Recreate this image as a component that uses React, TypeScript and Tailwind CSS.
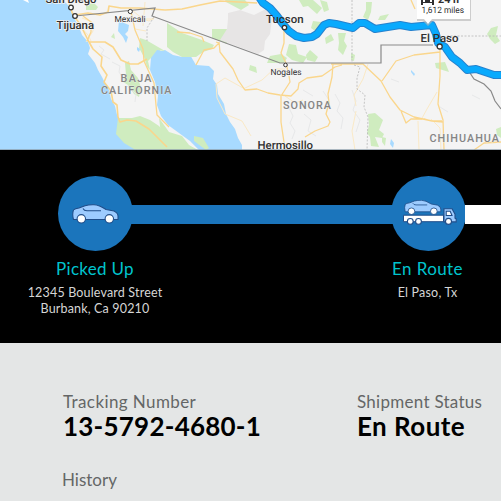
import type { ReactNode } from "react";

const ROUTE = "M259-3 263 3 270 8 277 16 283 24 289 31 296 36 304 38 312 37 317 34 324 25 329 23 336 24 353 28 359 23 365 23 375 29 400 25 411 27 432 25 436 34 438 43 445 47 452 57 460 63 467 70 476 69 494 75H508";

const MapView = () => (
  <svg viewBox="0 0 501 150" className="block h-[150px] w-full shrink-0 bg-[#f4f4f4]" fontFamily="Roboto, sans-serif">
    {/* Pacific and gulf */}
    <path fill="#a8daff" d="M0 0H63L69 6 73 16 79 27 82 35 88 42 90 48 88 54 95 63 98 70 102 77 105 83 109 90 111 99 115 106 117 115 119 118 124 130 139 141 153 150H0Z" />
    <path fill="#a8daff" d="M155 47 161 51 165 50 173 55 182 57 189 53 193 60 196 65 209 66 214 71 213 79 217 85 218 94 224 104 226 114 230 122 235 129 238 138 242 145 242 150H199L190 141 179 133 168 125 161 116 157 105 158 96 155 82 150 70 151 57Z" />
    <path fill="#fff" d="M23 0h5l1 3-2-1Z" />
    {/* Parks */}
    <g fill="#cfecbf">
      <path d="M118 118h14l8-2 10 4 9 6 8 9 3 25h-17l-14-8-15-9-8-9Z" />
      <path d="M140 38l6 2 19 11-8-1-6 8-3 3 2 9-3-3-3-10-5-9Z" />
      <path d="M167 23l15 10 20 7 12 5-2 4-9 3-7 5-14 0-9-5-6-5Z" />
      <path d="M212 29h15v15l-15-6ZM86 4l8-1 4 4-2 3H86ZM225 0h20l4 5-8 5-15-8ZM159 118l10 14 13 4 7 9 9 5h-35ZM194 136l9 2 6 10-3 2-12-9Z" />
      <path d="M125 63l4-2 2 9 7 8 3 10-2 9-5-3-6-9-5-3 3-7ZM111 37l3-4 1 6Z" />
      <path d="M299 0h14l9 8-5 6-9-8-5 1ZM313 21l8 1 3 7-6 4-7-5ZM325 38l6-4 3 6-8 4ZM289 44l7 1 2 9 9 3-4 6-11-3-6-5ZM270 56l11-2 6 4-3 5h-17ZM306 55l4-5 8 7-3 5-8-2ZM250 65l6 2 1 6-8-3ZM320 0l7 2 2 8-5 2Z" />
      <path d="M338 33l8 0-2 8 3 5-4 9-5-5 1-7ZM366 2l6 0-1 10-3 8-5-3 3-7ZM380 16l9-2-4 6h-7ZM351 53l4 2-1 6-3-1ZM491 28l7-2-2 9 4 6-5 3-5-5-3-5ZM435 63l10-1 4 10-13-4ZM368 114l7-1 8 7-4 10 5 4-2 4-7-1 4 10-8-1-1-9-3-4 2-8ZM382 137l4 1-1 8-3-4ZM496 129l5-2v11l-4-3Z" />
    </g>
    <path fill="#e7e5e5" d="M228 13l12-3 14 5 12-6 6 10-2 15-5 7-1 9-6 4-38-14 7-11 1-10Z" />
    <path fill="#a8daff" d="M119 20l5 3 5 2-1 6-3 3 3 3-2 6-3-6-5-6ZM137 47l3 2-1 3-2-2ZM411 70l4 4-1 2-3-4ZM391 139l3 4-1 5-3-4Z" />
    {/* Terrain */}
    <path fill="none" stroke="#e7e8e9" d="M99 46l5 4-3 4 9 5M112 62l8 4-1 6 5 8M127 86l9 8-1 8M289 108l4 8-3 7 5 8-3 8M304 114l7 6-3 11 8 5M335 94l5 9-3 8 6 7-2 11M352 90l4 11-3 9 7 10-4 12M391 79l8 3M440 107l8 5M472 95l8 4M303 90l10 6M323 91l6 9" />
    {/* Minor roads */}
    <path fill="none" stroke="#fae9c6" d="M82 18l10 4 1 9-7 11M78 24l10 11 3 6M133 11l10 8 6 2 6-4M145 2l-2 24M134 19h20M135 29l11 2M216 84l9-6 18 10M216 84l1 14 8 16 17 7 9 15M243 89l19-9 12-11 11 0M285 96l10 7 8-3M368 64l-5 15-9 16 2 11M437 92l-10 17-6 11M418 121l1 29M431 119l9 9 1 22M356 111l-4 20 3 19" />
    {/* Highways */}
    <g fill="none" stroke="#fad68c" strokeWidth="1.3" strokeLinejoin="round">
      <path d="M68 0l5 15 7 9 9 18 16 0 8 5 8 13 9 4 8 0 9-5M89 42l4 7 9 8-1 9 6 9-3 7 7 9 2 11 4 3 1 12 2 5 7-2 9 1 13 8 18 18M165 10l17-1 18-4 20-4 37 2M75 15l13-2 12 2 8-3 1-6 12 2 19 0 25 2" strokeWidth="1.6" />
      <path d="M83 16l8 6 0 10-4 9M131 12l4 18 8 19 1 12 10 22 2 22 1 10 12 12M177 32l13 1 12 4 2 5M216 42l3 1-5 5-10 2-8 15M219 42l1 10 13 17 5 11 7 10 12-1 11 4 12 2 11 1 7-7 1-6 8-5 15-2 13-9 7-2M284 28l0 15-3 10 5 10 3 13 1 6-9 14 0 26 4 27M333 64l-1 13-4 17 1 9-3 11 4 8-2 4-13 5-10 6M331 64h32l18 17 9 16 10 13 14 7 18 4 10 0M382 81l14-20 18-6 26-3M440 46l0 30-2 28 5 16 1 30M401 111l5 12 5-4h14l7 2 11 1M411 0l4 9M474 150l10-7 17-1" />
    </g>
    {/* Borders */}
    <g fill="none" stroke="#898989" strokeWidth="1.2">
      <path d="M75 16l80-8-3 8 128 47h101V45h52" />
      <path strokeDasharray="2 1.5" strokeWidth=".8" stroke="#b8b8b8" d="M352 0v63M447 36h54M154 17l-7 11 0 13M354 65l6 2-3 11 0 11 8 6-1 12 4 10-1 33" />
      <path d="M470 73l4 6 10 5 7 7 4 10 6 8" />
    </g>
    {/* Route */}
    <g fill="none" strokeLinejoin="round">
      <path d={ROUTE} stroke="#2682ce" strokeWidth="8" />
      <path d={ROUTE} stroke="#09aafd" strokeWidth="6" />
    </g>
    <g fill="#fff" stroke="#343434" strokeWidth="1.3">
      <circle cx="71" cy="7.5" r="2.3" /><circle cx="75" cy="16" r="2.3" />
      <circle cx="130.3" cy="11.5" r="2.1" strokeWidth="1" /><circle cx="284.5" cy="27.5" r="2.2" />
      <circle cx="285.5" cy="65" r="1.8" strokeWidth="1" /><circle cx="439.7" cy="46.5" r="2.5" />
    </g>
    {/* Travel time callout */}
    <path fill="#b8b8b8" opacity=".65" d="M417 0h54v21h-38l-5 5-5-5h-6Z" />
    <path fill="#fff" d="M417-1h53v20h-38l-4 5-4-5h-7Z" />
    <path fill="#303030" fillRule="evenodd" d="M423-4h9l2 4v5h-2v-2h-9v2h-2V0ZM423 0v2h2V0ZM430 0v2h2V0Z" />
    <g fill="#303030" stroke="#f4f4f4" strokeWidth="1.4" paintOrder="stroke" fontWeight="500" textRendering="geometricPrecision">
      <text x="45.5" y="3" fontSize="11.5" textLength="51" lengthAdjust="spacingAndGlyphs">San Diego</text>
      <text x="56.5" y="29" fontSize="11.3" textLength="37.5" lengthAdjust="spacingAndGlyphs">Tijuana</text>
      <text x="114.5" y="21.5" fontSize="8.5" fontWeight="400" textLength="31" lengthAdjust="spacingAndGlyphs">Mexicali</text>
      <text x="266" y="22.5" fontSize="11.3" textLength="37.5" strokeWidth="0" lengthAdjust="spacingAndGlyphs">Tucson</text>
      <text x="270.5" y="75" fontSize="8.5" fontWeight="400" textLength="31" lengthAdjust="spacingAndGlyphs">Nogales</text>
      <text x="257.5" y="149.2" fontSize="11.3" textLength="55.5" lengthAdjust="spacingAndGlyphs">Hermosillo</text>
      <text x="420.5" y="41.5" fontSize="11.3" fontWeight="500" strokeWidth="0" textLength="38" lengthAdjust="spacingAndGlyphs">El Paso</text>
      <text x="421.5" y="12.5" fontSize="8.8" fontWeight="400" strokeWidth="0" textLength="42.5" lengthAdjust="spacingAndGlyphs">1,612 miles</text>
      <text x="438" y="3" fontSize="11" fontWeight="700" strokeWidth="0" textLength="21" lengthAdjust="spacingAndGlyphs">24 h</text>
    </g>
    <g fill="#858585" stroke="#f4f4f4" strokeWidth=".5" paintOrder="stroke" fontSize="10.8" fontWeight="500">
      <text x="120.5" y="81.8" textLength="31">BAJA</text>
      <text x="101" y="93.6" textLength="70.5">CALIFORNIA</text>
      <text x="283" y="109" textLength="48">SONORA</text>
      <text x="429.5" y="141.7" textLength="69.5">CHIHUAHUA</text>
    </g>
    <path d="M0 149.5h501" stroke="#8b9caa" strokeOpacity=".7" />
  </svg>
);

const Car = () => (
  <g stroke="#204d89" strokeWidth="1.05" strokeLinejoin="round">
    <path fill="#9dcbff" d="M1.5 6Q3 4.5 7 4L13 1.7Q17 .5 22 .7T34 5.5L42 7Q46 9 46 12V15.5H1.5Q0 10 1.5 6Z" />
    <path fill="none" d="M11 4.5Q12 6.7 15 6.7H29" />
    <circle cx="9.3" cy="14.8" r="4.2" fill="#fff" />
    <circle cx="37.3" cy="14.8" r="4.2" fill="#fff" />
  </g>
);

const CarIcon = () => (
  <svg width="48" height="21" viewBox="-1 0 48 21" className="mt-[3px]"><Car /></svg>
);

const TruckIcon = () => (
  <svg width="54" height="27" viewBox="-.5 1.3 54 27" className="ml-1 shrink-0">
    <g transform="translate(.5 1) scale(.8 .78)"><Car /></g>
    <path fill="#fff" stroke="#204d89" strokeWidth="1" d="M0 16.5h40v6.5H0Z" />
    <path fill="#9dcbff" stroke="#204d89" strokeWidth="1.1" d="M40.5 10h8l3 5.5v4l1.2.7v3H40.5Z" />
    <path fill="#fff" stroke="#204d89" strokeWidth="1.1" d="M42.7 12.5h4l1.8 4.3h-5.8Z" />
    <g fill="#fff" stroke="#204d89" strokeWidth="1.1">
      <circle cx="6.8" cy="22.7" r="2.9" /><circle cx="15" cy="22.7" r="2.9" /><circle cx="45" cy="22.7" r="3" />
    </g>
  </svg>
);

const Station = ({ children }: { children: ReactNode }) => (
  <div className="flex size-[75px] shrink-0 items-center justify-center rounded-full bg-[#1b75bc]">{children}</div>
);

export default function App() {
  return (
    <main className="flex h-[501px] w-[501px] flex-col overflow-hidden bg-[#e4e6e6] font-['Lato','Open_Sans',sans-serif]">
      <MapView />
      <section className="h-[193px] shrink-0 bg-black pt-[25.5px]">
        <div className="flex items-center pl-[57.5px]">
          <Station><CarIcon /></Station>
          <div className="-ml-1 h-[19px] w-[266px] shrink-0 translate-y-px bg-[#1b75bc]" />
          <div className="-ml-1"><Station><TruckIcon /></Station></div>
          <div className="-ml-px h-[19px] flex-1 translate-y-px bg-white" />
        </div>
        <div className="mt-[7.5px] flex justify-between">
          <div className="w-[190px] text-center">
            <h2 className="text-[17px] leading-[21px] tracking-[.3px] text-[#00c4ce]">Picked Up</h2>
            <p className="mt-[6px] text-[12.5px] leading-[16px] tracking-[.17px] whitespace-nowrap text-[#d6d6d6]">12345 Boulevard Street<br />Burbank, Ca 90210</p>
          </div>
          <div className="w-[147px] text-center">
            <h2 className="text-[17px] leading-[21px] tracking-[.4px] text-[#00c4ce]">En Route</h2>
            <p className="mt-[6px] text-[12.5px] leading-[16px] tracking-[.2px] text-[#d6d6d6]">El Paso, Tx</p>
          </div>
        </div>
      </section>
      <section className="flex-1 pt-[48px] pl-[63px]">
        <div className="flex">
          <div className="w-[294px] shrink-0">
            <h3 className="text-[17px] leading-[22px] tracking-[.4px] text-[#646666]">Tracking Number</h3>
            <p className="-mt-px text-[26px] leading-[28px] font-bold tracking-[.22px] text-black">13-5792-4680-1</p>
          </div>
          <div>
            <h3 className="text-[17px] leading-[22px] tracking-[.27px] whitespace-nowrap text-[#646666]">Shipment Status</h3>
            <p className="-mt-px text-[26px] leading-[28px] font-bold tracking-[.45px] text-black">En Route</p>
          </div>
        </div>
        <h3 className="mt-[29px] -ml-px text-[17px] leading-[22px] text-[#646666]">History</h3>
      </section>
    </main>
  );
}
